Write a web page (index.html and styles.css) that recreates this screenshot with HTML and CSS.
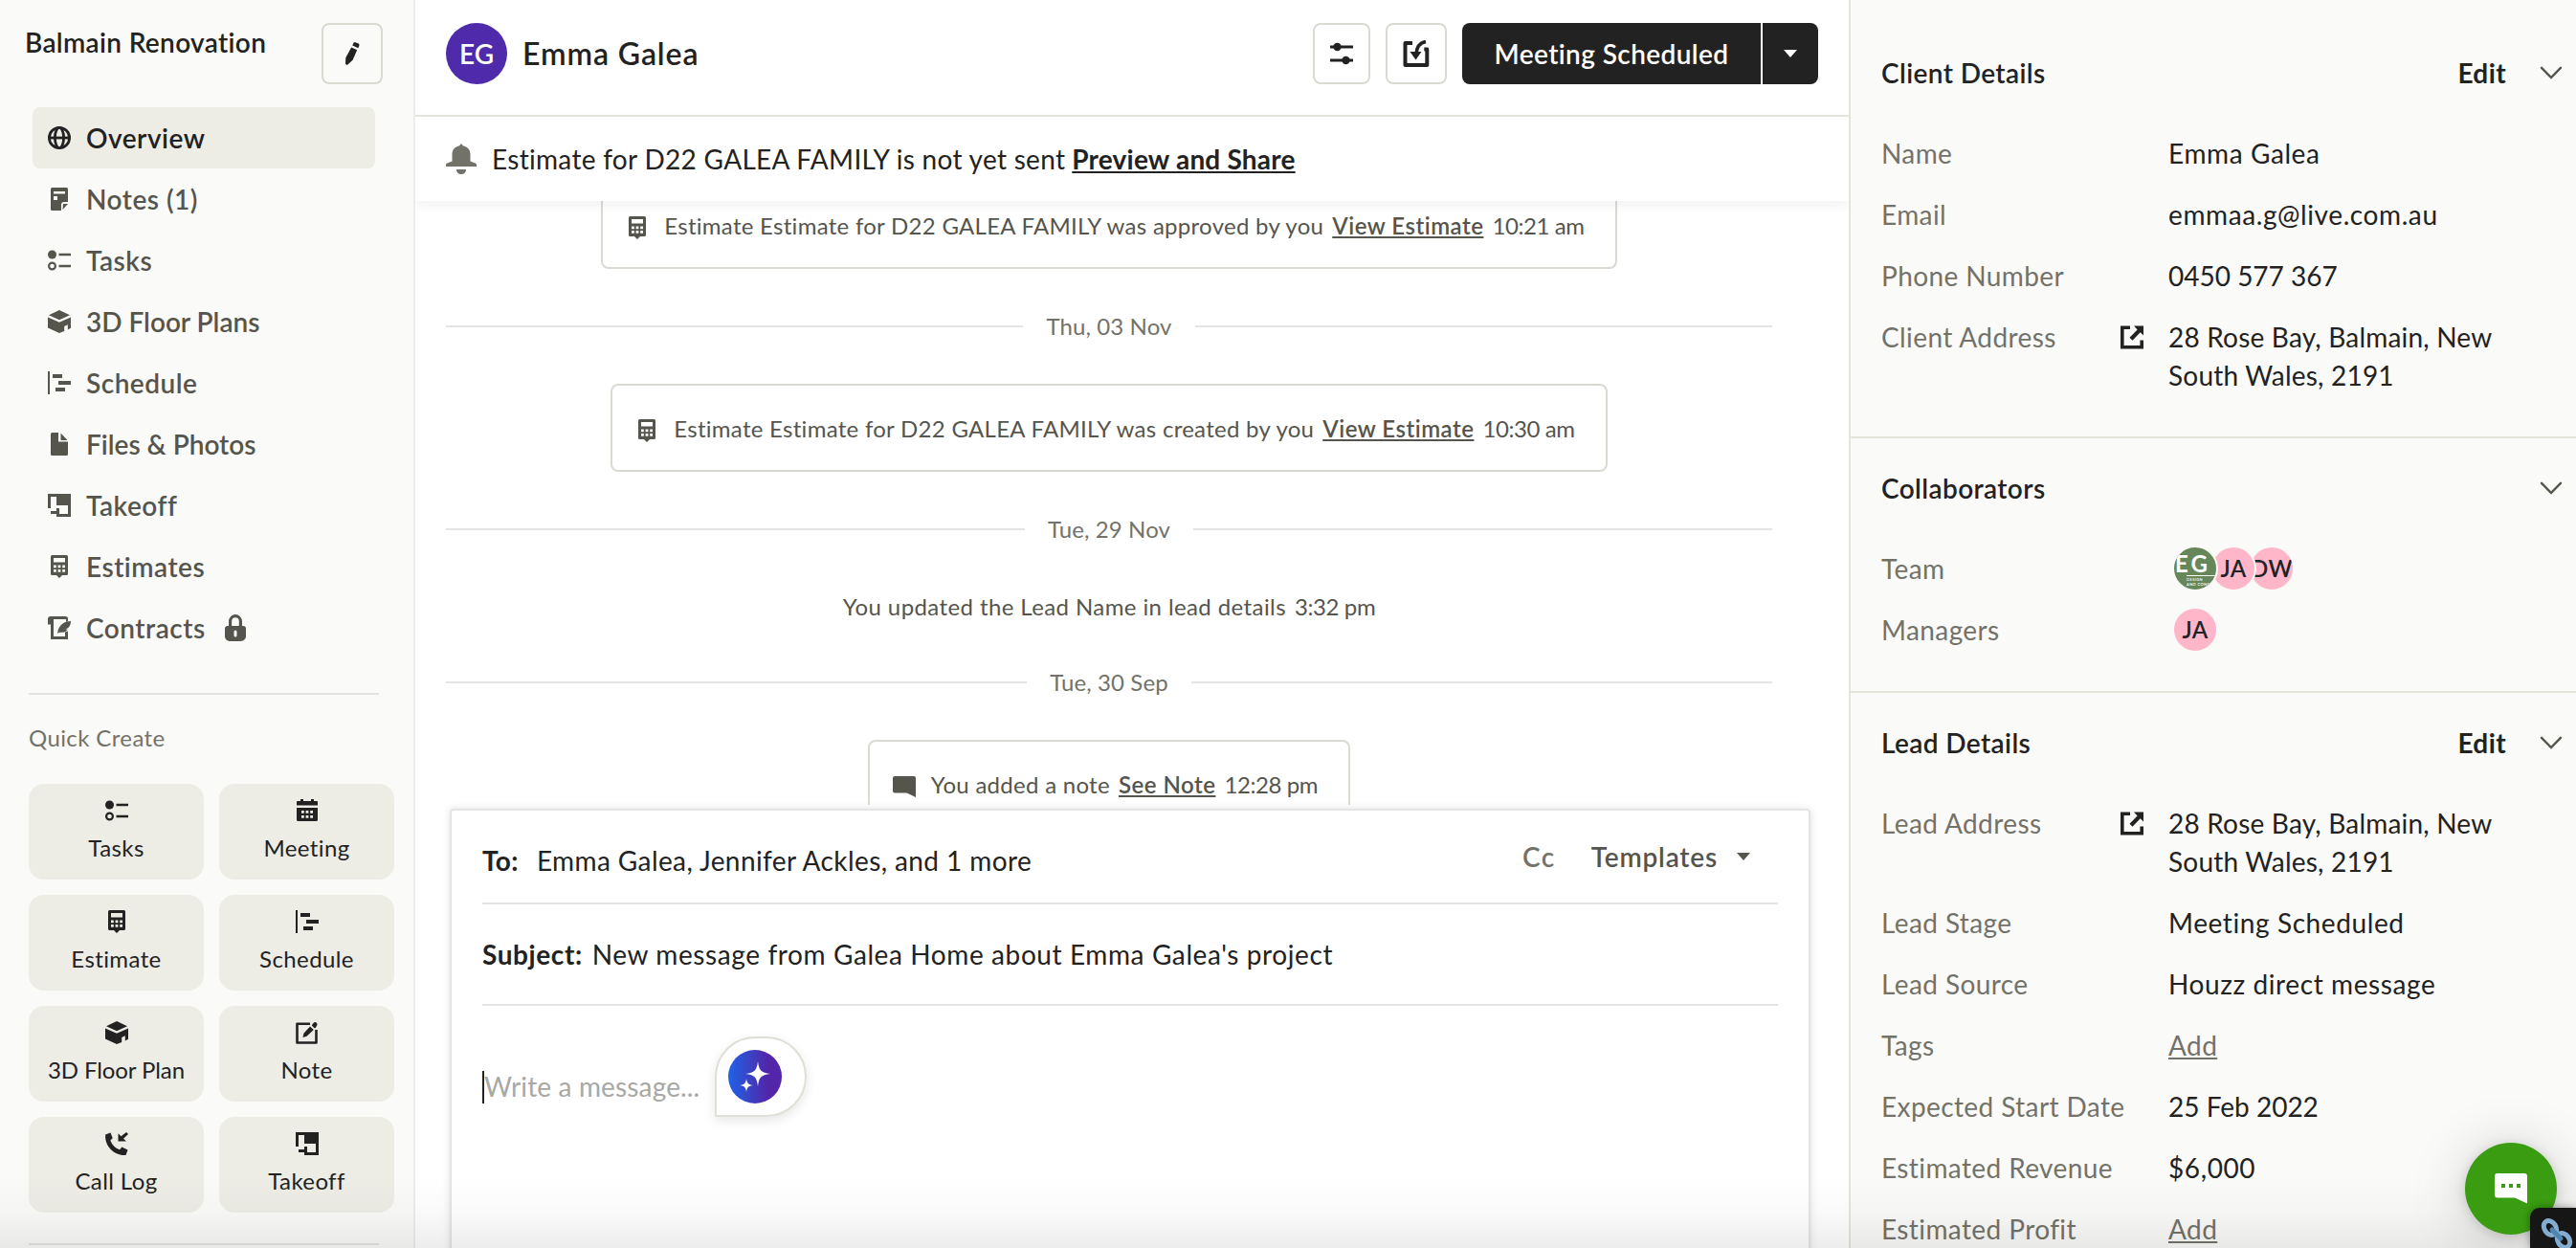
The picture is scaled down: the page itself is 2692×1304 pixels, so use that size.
FILE: index.html
```html
<!DOCTYPE html>
<html lang="en">
<head>
    <meta charset="UTF-8">
    <meta name="viewport" content="width=device-width, initial-scale=1.0">
    <title>Balmain Renovation - Overview</title>
    <link rel="stylesheet" href="styles.css">
</head>
<body>
    <!-- icon sprite -->
    <svg class="sprite" xmlns="http://www.w3.org/2000/svg">
        <symbol id="i-globe" viewBox="0 0 24 24"><g fill="none" stroke="currentColor" stroke-width="2.800"><circle cx="12" cy="12" r="10.600"/><ellipse cx="12" cy="12" rx="4.600" ry="10.600"/><path d="M1.500 12h21"/></g></symbol>
        <symbol id="i-notes" viewBox="0 0 24 24"><path fill="currentColor" fill-rule="evenodd" d="M4.500 0h15A1.500 1.500 0 0 1 21 1.500V15h-4a3 3 0 0 0-3 3v6H4.500A1.500 1.500 0 0 1 3 22.500v-21A1.500 1.500 0 0 1 4.500 0zM6 4v2.500h12V4zm0 5v4h4V9z"/><path fill="currentColor" d="M16 17h5l-5.500 6z"/></symbol>
        <symbol id="i-tasks" viewBox="0 0 24 24"><circle cx="4.500" cy="6" r="4.500" fill="currentColor"/><circle cx="4.500" cy="18" r="3.400" fill="none" stroke="currentColor" stroke-width="2.200"/><path d="M11.500 4.700H24v2.600H11.500zM11.500 16.700H24v2.600H11.500z" fill="currentColor"/></symbol>
        <symbol id="i-cube" viewBox="0 0 24 24"><path fill="currentColor" d="M12 0l11 5.300L12 10.300 1 5.300zM0 7.500l12 5.300 12-5.300v11.200L20.800 20.500v-5.300l-3.600 1.700v5.200L12 24 0 18.500z"/></symbol>
        <symbol id="i-schedule" viewBox="0 0 24 24"><path fill="currentColor" d="M0 0h2v24H0zM5 3h10v4H5zM11 10h13v4H11zM8 17h10v4H8z"/></symbol>
        <symbol id="i-file" viewBox="0 0 24 24"><path fill="currentColor" d="M4.500 0H11v9.500h10v13a1.500 1.500 0 0 1-1.500 1.500h-15A1.500 1.500 0 0 1 3 22.500v-21A1.500 1.500 0 0 1 4.500 0zM13.500.5L20.500 8h-7z"/></symbol>
        <symbol id="i-takeoff" viewBox="0 0 24 24"><path fill="currentColor" fill-rule="evenodd" d="M0 0h24v24H9v-3H3v-3h6v-3h3v6h9v-9H9V3H3v12H0z"/></symbol>
        <symbol id="i-estimate" viewBox="0 0 24 24"><path fill="currentColor" fill-rule="evenodd" d="M4.500 0h15A1.500 1.500 0 0 1 21 1.500v18a1.500 1.500 0 0 1-1.500 1.500H15l-3 3-3-3H4.500A1.500 1.500 0 0 1 3 19.500v-18A1.500 1.500 0 0 1 4.500 0zM6 3v4.500h12V3zm0 7.500v2.800h2.800v-2.800zm4.600 0v2.800h2.800v-2.800zm4.600 0v2.800H18v-2.800zM6 15v2.800h2.800V15zm4.600 0v2.800h2.800V15zm4.600 0v2.800H18V15z"/></symbol>
        <symbol id="i-contract" viewBox="0 0 24 24"><path fill="currentColor" d="M3 0h15.500A2.500 2.500 0 0 1 21 2.500V5l-2 1V3H6v18h12v-4.500l3-1V24H3V8.500H0V3a3 3 0 0 1 3-3z"/><path fill="currentColor" d="M24 5c-7 0-13 4-14 13l2-1.300c6 .8 8-1.700 8.500-3.200H18c4-.8 5.700-3.500 6-8.500z"/></symbol>
        <symbol id="i-lock" viewBox="0 0 22 28"><path fill="none" stroke="currentColor" stroke-width="3.200" d="M5.600 14V7.500a5.400 5.800 0 0 1 10.800 0V14"/><path fill="currentColor" fill-rule="evenodd" d="M3 12h16a3 3 0 0 1 3 3v8c0 3-3 5-6 5H6c-3 0-6-2-6-5v-8a3 3 0 0 1 3-3zm6.500 6v4a1.500 1.500 0 0 0 3 0v-4a1.500 1.500 0 0 0-3 0z"/></symbol>
        <symbol id="i-pencil" viewBox="0 0 24 24"><path fill="currentColor" d="M14.600 0l3.500 1.300c1.200.5 1.700 1.500 1.200 2.600l-1 2.300-6-2.600 1-2.400c.3-.8.8-1 1.300-.9zM11.200 5.600l6 2.700-4.600 10.500L6.800 24 5 22.800l.3-6.500z"/></symbol>
        <symbol id="i-calendar" viewBox="0 0 24 24"><path fill="currentColor" fill-rule="evenodd" d="M5 0h3v2h8V0h3v2h3a1 1 0 0 1 1 1v3.500H1V3a1 1 0 0 1 1-1h3zM1 9h22v12.500a1.500 1.500 0 0 1-1.500 1.500h-19A1.500 1.500 0 0 1 1 21.500zm5 3v2.800h2.800V12zm4.600 0v2.800h2.800V12zm4.600 0v2.800H18V12zM6 17v2.800h2.800V17zm4.600 0v2.800h2.800V17zm4.600 0v2.800H18V17z"/></symbol>
        <symbol id="i-compose" viewBox="0 0 24 24"><path fill="none" stroke="currentColor" stroke-width="2.600" stroke-linejoin="round" d="M15 2.700H1.500v19.800h20V9"/><path fill="currentColor" d="M15 5.500l3.800 3.600-7.300 6.700-4 1.200.9-4.200zM18 2.500l1.500-1.300c1.500-.8 3.500 1 2.900 2.700l-1.600 3-1.200.3-2.800-2.700z"/></symbol>
        <symbol id="i-call" viewBox="0 0 24 24"><path fill="currentColor" d="M5.500.5l2.200 5.800-2.300 2.300c1.500 4.500 5 8.200 9.700 9.700l2.300-2.800 6.100 3-2 5.500C9 24.500-1 14 .2 2.500zM22 0l2 2-5 4.800 3 2.700h-8.500V1.200l3 3z"/></symbol>
        <symbol id="i-sliders" viewBox="0 0 24 24"><path d="M0 5h24M0 19h24" stroke="currentColor" stroke-width="2.800"/><circle cx="7.500" cy="5" r="4.200" fill="currentColor"/><circle cx="16.500" cy="19" r="4.200" fill="currentColor"/></symbol>
        <symbol id="i-import" viewBox="0 0 28 28"><path fill="none" stroke="currentColor" stroke-width="4" stroke-linejoin="round" d="M10 3H2.500v23h22.800V9.500h-3"/><path fill="none" stroke="currentColor" stroke-width="3.600" d="M24 1.500c-6 1-9.500 5-10 13"/><path fill="currentColor" d="M7.500 12h12L13.500 20.500z"/></symbol>
        <symbol id="i-bell" viewBox="0 0 32 32"><path fill="currentColor" d="M16 0l1.800 2.300c4.700 1 7.700 4.200 7.700 9V18.500l4.500 1.700a2 2 0 0 1 2 2V24H0v-1.800a2 2 0 0 1 2-2l4.500-1.700v-7.200c0-4.800 3-8 7.700-9zM11 27h10c0 3-2 5-5 5s-5-2-5-5z"/></symbol>
        <symbol id="i-note-bubble" viewBox="0 0 24 24"><path fill="currentColor" d="M2 1h20a2 2 0 0 1 2 2v20l-9.500-4.500H2a2 2 0 0 1-2-2V3a2 2 0 0 1 2-2z"/></symbol>
        <symbol id="i-external" viewBox="0 0 24 24"><path fill="none" stroke="currentColor" stroke-width="3.600" d="M10 1.800H1.800v20.400h20.400V15"/><path fill="currentColor" d="M14 0h10v10l-3.300-3.200-8.200 8.400-3-3 8.100-8.300z"/></symbol>
        <symbol id="i-chevron" viewBox="0 0 24 14"><path fill="none" stroke="currentColor" stroke-width="2.400" stroke-linecap="round" d="M2 1.800l10 10.200 10-10.200"/></symbol>
        <symbol id="i-caret" viewBox="0 0 14 8"><path fill="currentColor" d="M0 0h14L7 8z"/></symbol>
    </svg>

    <div class="app">
        <aside class="sidebar">
            <div class="sidebar-head">
                <h1 class="project-name">Balmain Renovation</h1>
                <button class="icon-btn"><svg class="icon"><use href="#i-pencil"/></svg></button>
            </div>

            <nav class="nav">
                <a class="nav-item active"><svg class="icon"><use href="#i-globe"/></svg>Overview</a>
                <a class="nav-item"><svg class="icon"><use href="#i-notes"/></svg>Notes (1)</a>
                <a class="nav-item"><svg class="icon"><use href="#i-tasks"/></svg>Tasks</a>
                <a class="nav-item long"><svg class="icon"><use href="#i-cube"/></svg>3D Floor Plans</a>
                <a class="nav-item"><svg class="icon"><use href="#i-schedule"/></svg>Schedule</a>
                <a class="nav-item long"><svg class="icon"><use href="#i-file"/></svg>Files &amp; Photos</a>
                <a class="nav-item"><svg class="icon"><use href="#i-takeoff"/></svg>Takeoff</a>
                <a class="nav-item"><svg class="icon"><use href="#i-estimate"/></svg>Estimates</a>
                <a class="nav-item"><svg class="icon"><use href="#i-contract"/></svg>Contracts<svg class="lock"><use href="#i-lock"/></svg></a>
            </nav>

            <div class="sidebar-line"></div>
            <div class="quick-title">Quick Create</div>
            <div class="quick-grid">
                <button class="quick-btn"><svg class="icon"><use href="#i-tasks"/></svg>Tasks</button>
                <button class="quick-btn"><svg class="icon"><use href="#i-calendar"/></svg>Meeting</button>
                <button class="quick-btn"><svg class="icon"><use href="#i-estimate"/></svg>Estimate</button>
                <button class="quick-btn"><svg class="icon"><use href="#i-schedule"/></svg>Schedule</button>
                <button class="quick-btn long"><svg class="icon"><use href="#i-cube"/></svg>3D Floor Plan</button>
                <button class="quick-btn"><svg class="icon"><use href="#i-compose"/></svg>Note</button>
                <button class="quick-btn"><svg class="icon"><use href="#i-call"/></svg>Call Log</button>
                <button class="quick-btn"><svg class="icon"><use href="#i-takeoff"/></svg>Takeoff</button>
            </div>
            <div class="sidebar-line last"></div>
        </aside>

        <main class="main">
            <header class="main-head">
                <div class="avatar-lg">EG</div>
                <h2 class="client-name">Emma Galea</h2>
                <button class="icon-btn narrow"><svg class="icon"><use href="#i-sliders"/></svg></button>
                <button class="icon-btn"><svg class="icon-28"><use href="#i-import"/></svg></button>
                <div class="stage-btn">
                    <button class="stage-label">Meeting Scheduled</button>
                    <button class="stage-caret"><svg class="caret"><use href="#i-caret"/></svg></button>
                </div>
            </header>

            <div class="banner">
                <svg class="bell"><use href="#i-bell"/></svg>
                <span class="banner-text">Estimate for D22 GALEA FAMILY is not yet sent</span>
                <a class="banner-link">Preview and Share</a>
            </div>

            <section class="feed">
                <div class="event">
                    <svg class="icon"><use href="#i-estimate"/></svg>
                    <span class="event-text">Estimate Estimate for D22 GALEA FAMILY was approved by you</span>
                    <a class="event-link">View Estimate</a>
                    <span class="time">10:21 am</span>
                </div>
                <div class="date">Thu, 03 Nov</div>
                <div class="event">
                    <svg class="icon"><use href="#i-estimate"/></svg>
                    <span class="event-text">Estimate Estimate for D22 GALEA FAMILY was created by you</span>
                    <a class="event-link">View Estimate</a>
                    <span class="time">10:30 am</span>
                </div>
                <div class="date">Tue, 29 Nov</div>
                <div class="event plain"><span class="event-text">You updated the Lead Name in lead details</span><span class="time">3:32 pm</span></div>
                <div class="date">Tue, 30 Sep</div>
                <div class="event">
                    <svg class="icon"><use href="#i-note-bubble"/></svg>
                    <span class="event-text">You added a note</span>
                    <a class="event-link">See Note</a>
                    <span class="time">12:28 pm</span>
                </div>
            </section>

            <section class="composer">
                <div class="field to">
                    <b>To:</b>
                    <span class="recipients">Emma Galea, Jennifer Ackles, and 1 more</span>
                    <a class="cc">Cc</a>
                    <a class="templates">Templates</a>
                    <svg class="caret"><use href="#i-caret"/></svg>
                </div>
                <div class="field subject">
                    <b>Subject:</b>
                    <span>New message from Galea Home about Emma Galea's project</span>
                </div>
                <div class="message">
                    <span class="cursor"></span>
                    <span class="placeholder">Write a message...</span>
                    <div class="ai-bubble">
                        <svg class="ai-icon" viewBox="0 0 56 56">
                            <defs><linearGradient id="ai" x1="0" x2="1"><stop offset="0" stop-color="#1f63e6"/><stop offset=".75" stop-color="#5325a8"/></linearGradient></defs>
                            <circle cx="28" cy="28" r="28" fill="url(#ai)"/>
                            <path fill="#fff" d="M31 12c1.300 9.500 3 11.500 13 13-10 1.500-11.700 3.500-13 13-1.300-9.500-3-11.500-13-13 10-1.500 11.700-3.500 13-13zM19 30c.7 4.800 1.700 6.200 7 7-5.300.8-6.300 2.200-7 7-.7-4.800-1.700-6.200-7-7 5.300-.8 6.300-2.200 7-7z"/>
                        </svg>
                    </div>
                </div>
            </section>
        </main>

        <aside class="details">
            <section class="panel">
                <div class="panel-head"><h3>Client Details</h3><a class="edit">Edit</a><svg class="chevron"><use href="#i-chevron"/></svg></div>
                <div class="row"><span class="label">Name</span><span class="value">Emma Galea</span></div>
                <div class="row"><span class="label">Email</span><span class="value">emmaa.g@live.com.au</span></div>
                <div class="row"><span class="label">Phone Number</span><span class="value digits">0450 577 367</span></div>
                <div class="row"><span class="label">Client Address</span><svg class="external"><use href="#i-external"/></svg><span class="value address">28 Rose Bay, Balmain, New<br>South Wales, 2191</span></div>
            </section>

            <section class="panel">
                <div class="panel-head"><h3>Collaborators</h3><svg class="chevron"><use href="#i-chevron"/></svg></div>
                <div class="row">
                    <span class="label">Team</span>
                    <div class="avatars">
                        <div class="avatar logo"><span class="logo-name">EG</span><span class="logo-sub">DESIGN<br>AND CONST</span></div>
                        <div class="avatar"><span>JA</span></div>
                        <div class="avatar"><span>DW</span></div>
                    </div>
                </div>
                <div class="row">
                    <span class="label">Managers</span>
                    <div class="avatars"><div class="avatar"><span>JA</span></div></div>
                </div>
            </section>

            <section class="panel">
                <div class="panel-head"><h3>Lead Details</h3><a class="edit">Edit</a><svg class="chevron"><use href="#i-chevron"/></svg></div>
                <div class="row"><span class="label">Lead Address</span><svg class="external"><use href="#i-external"/></svg><span class="value address">28 Rose Bay, Balmain, New<br>South Wales, 2191</span></div>
                <div class="row"><span class="label">Lead Stage</span><span class="value">Meeting Scheduled</span></div>
                <div class="row"><span class="label">Lead Source</span><span class="value">Houzz direct message</span></div>
                <div class="row"><span class="label">Tags</span><a class="add">Add</a></div>
                <div class="row"><span class="label">Expected Start Date</span><span class="value digits">25 Feb 2022</span></div>
                <div class="row"><span class="label">Estimated Revenue</span><span class="value">$6,000</span></div>
                <div class="row"><span class="label">Estimated Profit</span><a class="add">Add</a></div>
            </section>
        </aside>
    </div>

    <div class="bottom-shade"></div>

    <button class="chat-btn">
        <svg width="34" height="32" viewBox="0 0 34 32"><path fill="#fff" d="M3 0h28a3 3 0 0 1 3 3v28.500l-13-6H3a3 3 0 0 1-3-3V3a3 3 0 0 1 3-3z"/><path fill="#3a9c11" d="M7 11h4v4H7zM15 11h4v4h-4zM23 11h4v4h-4z"/></svg>
    </button>
    <div class="link-box">
        <svg width="48" height="42" viewBox="0 0 48 42"><g fill="none" stroke="#82add0" stroke-width="5"><ellipse cx="21" cy="21" rx="6" ry="8" transform="rotate(-35 21 21)"/><ellipse cx="35" cy="34" rx="6" ry="8" transform="rotate(-35 35 34)"/></g><path d="M23 23l9 9" stroke="#4f86ae" stroke-width="5" stroke-linecap="round"/></svg>
    </div>
</body>
</html>
```

FILE: styles.css
```css
* {
    box-sizing: border-box;
}
body {
    margin: 0;
    height: 1304px;
    overflow: hidden;
    font-family: Lato, "Open Sans", sans-serif;
    font-size: 28px;
    line-height: 40px;
    letter-spacing: 0.4px;
    color: #222;
    background: #fff;
}
h1, h2, h3 {
    margin: 0;
    font-size: 28px;
    font-weight: 600;
}
button {
    padding: 0;
    border: none;
    background: none;
    font: inherit;
    letter-spacing: inherit;
    color: inherit;
}
svg {
    display: block;
    flex-shrink: 0;
}
.sprite {
    position: absolute;
    width: 0;
    height: 0;
}
.icon {
    width: 24px;
    height: 24px;
}
.icon-28 {
    width: 28px;
    height: 28px;
}
.caret {
    width: 14px;
    height: 8px;
}
.app {
    display: grid;
    grid-template-columns: 434px 1498px 760px;
    height: 1304px;
}

/* left sidebar */
.sidebar {
    background: #fafaf8;
    border-right: 2px solid #ecece9;
    overflow: hidden;
}
.sidebar-head {
    display: flex;
    justify-content: space-between;
    height: 112px;
    padding: 24px 32px 0 26px;
}
.project-name {
    line-height: 40px;
    letter-spacing: 0.35px;
}
.icon-btn {
    display: flex;
    align-items: center;
    justify-content: center;
    width: 64px;
    height: 64px;
    border: 2px solid #dadad2;
    border-radius: 8px;
}
.icon-btn.narrow {
    width: 60px;
}
.nav {
    width: 358px;
    margin-left: 34px;
}
.nav-item {
    display: flex;
    align-items: center;
    gap: 16px;
    height: 64px;
    padding-left: 16px;
    border-radius: 8px;
    font-weight: 600;
    letter-spacing: 0.5px;
    color: #55554e;
}
.nav-item.long {
    letter-spacing: 0;
}
.nav-item.active {
    background: #edede6;
    color: #222;
}
.lock {
    width: 22px;
    height: 28px;
    margin-left: 4px;
}
.sidebar-line {
    width: 366px;
    height: 2px;
    margin: 36px 0 0 30px;
    background: #e2e2de;
}
.sidebar-line.last {
    margin-top: 32px;
}
.quick-title {
    margin: 29px 0 32px 30px;
    font-size: 24px;
    line-height: 32px;
    letter-spacing: 0.4px;
    color: #72726a;
}
.quick-grid {
    display: grid;
    grid-template-columns: 183px 183px;
    grid-auto-rows: 100px;
    gap: 16px;
    margin-left: 30px;
}
.quick-btn {
    display: flex;
    flex-direction: column;
    align-items: center;
    gap: 10px;
    padding-top: 16px;
    border-radius: 16px;
    background: #edede6;
    font-size: 24px;
    line-height: 34px;
    letter-spacing: 0.4px;
}
.quick-btn.long {
    letter-spacing: -0.1px;
}

/* conversation */
.main {
    min-width: 0;
    overflow: hidden;
}
.main-head {
    display: flex;
    align-items: flex-start;
    height: 122px;
    padding: 24px 32px 0 32px;
    border-bottom: 2px solid #e6e6e0;
}
.avatar-lg {
    width: 64px;
    border-radius: 50%;
    background: #4f2bab;
    color: #fff;
    line-height: 64px;
    text-align: center;
    font-weight: 600;
    letter-spacing: 0;
}
.client-name {
    flex: 1;
    margin-left: 16px;
    font-size: 32px;
    line-height: 63px;
    letter-spacing: 0.9px;
}
.main-head .icon-btn {
    margin-right: 16px;
}
.stage-btn {
    display: flex;
    gap: 2px;
    color: #fff;
}
.stage-label {
    width: 312px;
    height: 64px;
    border-radius: 8px 0 0 8px;
    background: #222;
    font-weight: 600;
}
.stage-caret {
    display: flex;
    align-items: center;
    justify-content: center;
    width: 58px;
    border-radius: 0 8px 8px 0;
    background: #222;
}
.banner {
    position: relative;
    z-index: 1;
    display: flex;
    align-items: center;
    height: 88px;
    padding-left: 32px;
    background: #fff;
    box-shadow: 0 4px 12px rgba(0,0,0,0.06);
}
.bell {
    width: 32px;
    height: 32px;
    margin-right: 16px;
    color: #72726a;
}
.banner-text {
    margin-right: 7px;
    letter-spacing: 0.3px;
}
.banner-link {
    font-weight: 700;
    letter-spacing: 0.2px;
    text-decoration: underline;
}
.feed {
    display: flex;
    flex-direction: column;
    align-items: center;
    gap: 40px;
    height: 631px;
    padding: 0 80px 0 32px;
    overflow: hidden;
    font-size: 24px;
    letter-spacing: 0.28px;
    color: #55554e;
}
.event {
    display: flex;
    flex-shrink: 0;
    align-items: center;
    height: 92px;
    padding: 2px 32px 0 24px;
    border: 2px solid #dadad2;
    border-radius: 8px;
}
.event:first-child {
    margin-top: -21px;
}
.event .icon {
    margin: 4px 16px 0 0;
}
.event-text {
    margin-right: 9px;
}
.event-link {
    margin-right: 9px;
    font-weight: 600;
    letter-spacing: 0.5px;
    text-decoration: underline;
}
.time {
    letter-spacing: -0.4px;
}
.event.plain {
    height: 40px;
    padding: 2px 0 0;
    border: none;
    letter-spacing: 0.4px;
}
.date {
    display: flex;
    align-items: center;
    gap: 24px;
    width: 100%;
    color: #72726a;
    letter-spacing: 0.1px;
}
.date::before,
.date::after {
    content: "";
    flex: 1;
    height: 2px;
    background: #e4e4e2;
}

/* message composer */
.composer {
    width: 1422px;
    height: 480px;
    margin: 4px 0 0 36px;
    padding: 0 32px;
    border: 2px solid #e4e4e4;
    border-radius: 4px;
    box-shadow: 0 0 8px rgba(0,0,0,0.12);
}
.field {
    display: flex;
    align-items: center;
    border-bottom: 2px solid #e4e4e4;
}
.field b {
    font-weight: 700;
}
.to {
    height: 98px;
    padding-top: 8px;
}
.recipients {
    flex: 1;
    margin-left: 19px;
}
.cc {
    margin: -8px 37px 0 0;
    color: #72726a;
    font-weight: 600;
    letter-spacing: 1.5px;
}
.templates {
    margin: -8px 20px 0 0;
    color: #55554e;
    font-weight: 600;
    letter-spacing: 0.8px;
}
.to .caret {
    margin: -8px 29px 0 0;
    color: #55554e;
}
.subject {
    gap: 10px;
    height: 106px;
    letter-spacing: 0.6px;
}
.message {
    display: flex;
    align-items: flex-start;
    padding-top: 32px;
}
.cursor {
    width: 2px;
    height: 34px;
    margin-top: 36px;
    background: #222;
}
.placeholder {
    width: 241px;
    margin-top: 32px;
    letter-spacing: 0.15px;
    color: #a8a8a4;
}
.ai-bubble {
    width: 96px;
    height: 84px;
    padding: 12px;
    border: 2px solid #dfdfd6;
    border-radius: 42px 42px 42px 0;
    box-shadow: 0 4px 12px rgba(0,0,0,0.1);
}
.ai-icon {
    width: 56px;
    height: 56px;
}

/* right details */
.details {
    border-left: 2px solid #e4e4da;
    background: #fafaf8;
    overflow: hidden;
}
.panel {
    padding: 32px 14px 20px 32px;
    border-bottom: 2px solid #e4e4da;
}
.panel:first-child {
    padding-top: 56px;
}
.panel-head {
    display: flex;
    align-items: center;
    margin-bottom: 44px;
}
.panel-head h3 {
    flex: 1;
}
.edit {
    margin-right: 35px;
    font-weight: 700;
}
.chevron {
    width: 24px;
    height: 14px;
    color: #55554e;
}
.row {
    display: flex;
    margin-bottom: 24px;
}
.label {
    flex: 0 0 300px;
    white-space: nowrap;
    color: #72726a;
}
.value {
    letter-spacing: 0.6px;
}
.value.digits {
    letter-spacing: 0;
}
.value.address {
    letter-spacing: 0.2px;
}
.external {
    width: 24px;
    height: 25px;
    margin: 8px 26px 0 -50px;
}
.add {
    color: #72726a;
    text-decoration: underline;
}
.avatars {
    display: flex;
    height: 40px;
    margin-left: 4px;
}
.avatar {
    display: flex;
    align-items: center;
    justify-content: center;
    width: 48px;
    height: 48px;
    margin: -4px -8px 0 0;
    border: 2px solid #fafaf8;
    border-radius: 50%;
    background: #ffb6c9;
    font-size: 24px;
    font-weight: 600;
    overflow: hidden;
}
.avatar:nth-child(1) {
    z-index: 3;
}
.avatar:nth-child(2) {
    z-index: 2;
}
.avatar.logo {
    display: block;
    background: #66875a;
    color: #fff;
}
.logo-name {
    display: block;
    margin: 7px 0 0 1px;
    font-size: 24px;
    font-weight: 700;
    line-height: 20px;
    letter-spacing: 3px;
}
.logo-sub {
    display: block;
    margin: 2px 0 0 13px;
    border-top: 1px solid #fff;
    padding-top: 1px;
    font-size: 4px;
    line-height: 5px;
}

/* floating items */
.bottom-shade {
    position: absolute;
    left: 0;
    bottom: 0;
    width: 100%;
    height: 76px;
    background: linear-gradient(rgba(0,0,0,0), rgba(0,0,0,0.02) 50%, rgba(0,0,0,0.07));
}
.chat-btn {
    position: absolute;
    left: 2576px;
    top: 1194px;
    display: flex;
    align-items: center;
    justify-content: center;
    width: 96px;
    height: 96px;
    border-radius: 50%;
    background: #3a9c11;
    box-shadow: 0 4px 60px rgba(0,0,0,0.18), 0 2px 12px rgba(0,0,0,0.15);
}
.link-box {
    position: absolute;
    left: 2644px;
    top: 1262px;
    width: 48px;
    height: 42px;
    border-radius: 10px 0 0 0;
    background: #161616;
    box-shadow: 0 0 8px rgba(0,0,0,0.4);
}
```
